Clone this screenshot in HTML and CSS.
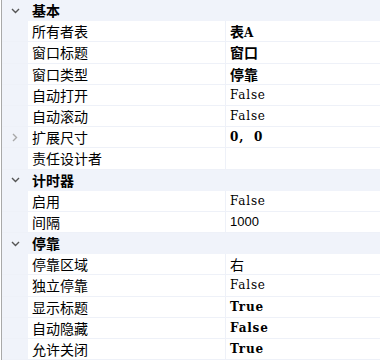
FILE: index.html
```html
<!DOCTYPE html>
<html>
  <head>
    <title>属性</title>
    <link rel="stylesheet" href="styles.css">
  </head>
  <body>
    <div class="grid">
      <div class="row cat">
        <span class="gutter"><svg class="chev" viewBox="0 0 8 6" width="9" height="6"><path d="M0.5 1 L4 4.5 L7.5 1" fill="none" stroke="#555" stroke-width="1.4"/></svg></span>
        <span class="title">基本</span>
      </div>
      <div class="row"><span class="gutter"></span><span class="name">所有者表</span><span class="value bold">表<span class="lat">A</span></span></div>
      <div class="row"><span class="gutter"></span><span class="name">窗口标题</span><span class="value bold">窗口</span></div>
      <div class="row"><span class="gutter"></span><span class="name">窗口类型</span><span class="value bold">停靠</span></div>
      <div class="row"><span class="gutter"></span><span class="name">自动打开</span><span class="value lat">False</span></div>
      <div class="row"><span class="gutter"></span><span class="name">自动滚动</span><span class="value lat">False</span></div>
      <div class="row">
        <span class="gutter"><svg class="chev" viewBox="0 0 6 8" width="6" height="9"><path d="M1 0.5 L4.5 4 L1 7.5" fill="none" stroke="#a8a8a8" stroke-width="1.4"/></svg></span>
        <span class="name">扩展尺寸</span><span class="value lat bold">0,&nbsp;&nbsp;0</span>
      </div>
      <div class="row"><span class="gutter"></span><span class="name">责任设计者</span><span class="value"></span></div>
      <div class="row cat">
        <span class="gutter"><svg class="chev" viewBox="0 0 8 6" width="9" height="6"><path d="M0.5 1 L4 4.5 L7.5 1" fill="none" stroke="#555" stroke-width="1.4"/></svg></span>
        <span class="title">计时器</span>
      </div>
      <div class="row"><span class="gutter"></span><span class="name">启用</span><span class="value lat">False</span></div>
      <div class="row"><span class="gutter"></span><span class="name">间隔</span><span class="value num">1000</span></div>
      <div class="row cat">
        <span class="gutter"><svg class="chev" viewBox="0 0 8 6" width="9" height="6"><path d="M0.5 1 L4 4.5 L7.5 1" fill="none" stroke="#555" stroke-width="1.4"/></svg></span>
        <span class="title">停靠</span>
      </div>
      <div class="row"><span class="gutter"></span><span class="name">停靠区域</span><span class="value">右</span></div>
      <div class="row"><span class="gutter"></span><span class="name">独立停靠</span><span class="value lat">False</span></div>
      <div class="row"><span class="gutter"></span><span class="name">显示标题</span><span class="value lat bold">True</span></div>
      <div class="row"><span class="gutter"></span><span class="name">自动隐藏</span><span class="value lat bold">False</span></div>
      <div class="row"><span class="gutter"></span><span class="name">允许关闭</span><span class="value lat bold">True</span></div>
    </div>
  </body>
</html>
```

FILE: styles.css
```css
/* Property grid */
body {
  margin: 0;
  background: #ffffff;
  font-family: "Noto Sans CJK SC", "Liberation Sans", sans-serif;
  font-size: 14px;
  color: #000;
  overflow: hidden;
}

.grid {
  width: 380px;
  height: 360px;
  border-left: 1px solid #a9a9a9;
  margin-left: 1px;
  box-sizing: border-box;
}

.row {
  display: flex;
  align-items: stretch;
  height: 21.2px;
  box-sizing: border-box;
  border-bottom: 1px solid #eef1f8;
}

.gutter {
  width: 26px;
  flex: none;
  background: #f0f3fa;
  display: flex;
  align-items: center;
  justify-content: center;
}

.cat {
  background: #f0f3fa;
  border-bottom: none;
}

.title {
  font-weight: bold;
  padding-left: 4px;
  line-height: 20px;
}

.name {
  width: 198px;
  flex: none;
  padding-left: 4px;
  box-sizing: border-box;
  line-height: 20px;
  border-right: 1px solid #eef1f8;
}

.value {
  flex: 1;
  padding-left: 4px;
  line-height: 20px;
}

.bold {
  font-weight: bold;
}

.lat {
  font-family: "DejaVu Serif", serif;
  font-size: 12px;
  letter-spacing: 0.8px;
}

.num {
  font-family: "Liberation Sans", sans-serif;
  font-size: 13px;
}
```
